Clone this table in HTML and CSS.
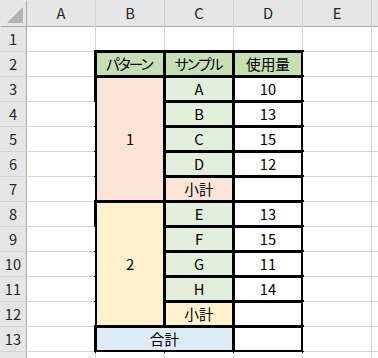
FILE: index.html
```html
<!DOCTYPE html>
<html lang="ja">
<head>
<meta charset="utf-8">
<title>Sheet</title>
<link rel="stylesheet" href="styles.css">
</head>
<body>
<div class="frame">
<div class="sheet">
  <div class="corner"><svg width="26" height="26" viewBox="0 0 26 26"><polygon points="23,7 23,23 7,23" fill="#b4b4b4"/></svg></div>
  <div class="ch">A</div><div class="ch">B</div><div class="ch">C</div><div class="ch">D</div><div class="ch">E</div><div class="ch"></div>

  <div class="rh">1</div><div class="c"></div><div class="c"></div><div class="c"></div><div class="c"></div><div class="c"></div><div class="c"></div>

  <div class="rh">2</div><div class="c"></div><div class="c t green kana">パターン</div><div class="c t green kana">サンプル</div><div class="c t green">使用量</div><div class="c"></div><div class="c"></div>

  <div class="rh">3</div><div class="c"></div><div class="c t peach merge5">1</div><div class="c t lgreen">A</div><div class="c t">10</div><div class="c"></div><div class="c"></div>
  <div class="rh">4</div><div class="c"></div><div class="c t lgreen">B</div><div class="c t">13</div><div class="c"></div><div class="c"></div>
  <div class="rh">5</div><div class="c"></div><div class="c t lgreen">C</div><div class="c t">15</div><div class="c"></div><div class="c"></div>
  <div class="rh">6</div><div class="c"></div><div class="c t lgreen">D</div><div class="c t">12</div><div class="c"></div><div class="c"></div>
  <div class="rh">7</div><div class="c"></div><div class="c t peach">小計</div><div class="c t"></div><div class="c"></div><div class="c"></div>

  <div class="rh">8</div><div class="c"></div><div class="c t yellow merge5">2</div><div class="c t lgreen">E</div><div class="c t">13</div><div class="c"></div><div class="c"></div>
  <div class="rh">9</div><div class="c"></div><div class="c t lgreen">F</div><div class="c t">15</div><div class="c"></div><div class="c"></div>
  <div class="rh">10</div><div class="c"></div><div class="c t lgreen">G</div><div class="c t">11</div><div class="c"></div><div class="c"></div>
  <div class="rh">11</div><div class="c"></div><div class="c t lgreen">H</div><div class="c t">14</div><div class="c"></div><div class="c"></div>
  <div class="rh">12</div><div class="c"></div><div class="c t yellow">小計</div><div class="c t"></div><div class="c"></div><div class="c"></div>

  <div class="rh">13</div><div class="c"></div><div class="c t blue span2">合計</div><div class="c t"></div><div class="c"></div><div class="c"></div>

  <div class="rh"></div><div class="c"></div><div class="c"></div><div class="c"></div><div class="c"></div><div class="c"></div><div class="c"></div>
</div>
</div>
</body>
</html>
```

FILE: styles.css
```css
html, body {
  margin: 0;
  padding: 0;
  background: #ffffff;
}

.frame {
  width: 378px;
  height: 358px;
  overflow: hidden;
}

.sheet {
  display: grid;
  grid-template-columns: 26px repeat(6, 68px);
  grid-template-rows: 26px repeat(14, 24px);
  gap: 1px;
  background: #d4d4d4;
  width: max-content;
  font-family: "Noto Sans CJK JP", "Noto Sans", sans-serif;
  font-size: 14.67px;
  color: #000000;
}

.sheet > div {
  display: flex;
  align-items: center;
  justify-content: center;
  line-height: 1;
  white-space: nowrap;
}

.kana {
  letter-spacing: -3px;
  text-indent: -3px;
}

.corner {
  background: #e6e6e6;
  box-shadow: 1px 1px 0 #ababab;
}

.corner svg {
  display: block;
}

.ch {
  background: #e6e6e6;
  color: #262626;
  box-shadow: 0 1px 0 #ababab;
}

.rh {
  background: #e6e6e6;
  color: #262626;
  box-shadow: 1px 0 0 #ababab;
}

.c {
  background: #ffffff;
}

.t {
  outline: 2px solid #000000;
  box-shadow: inset 0 0 0 1px #000000;
}

.green { background: #c6e0b4; }
.lgreen { background: #e2efda; }
.peach { background: #fce4d6; }
.yellow { background: #fff2cc; }
.blue { background: #ddebf7; }

.merge5 { grid-row: span 5; }
.span2 { grid-column: span 2; }
```
